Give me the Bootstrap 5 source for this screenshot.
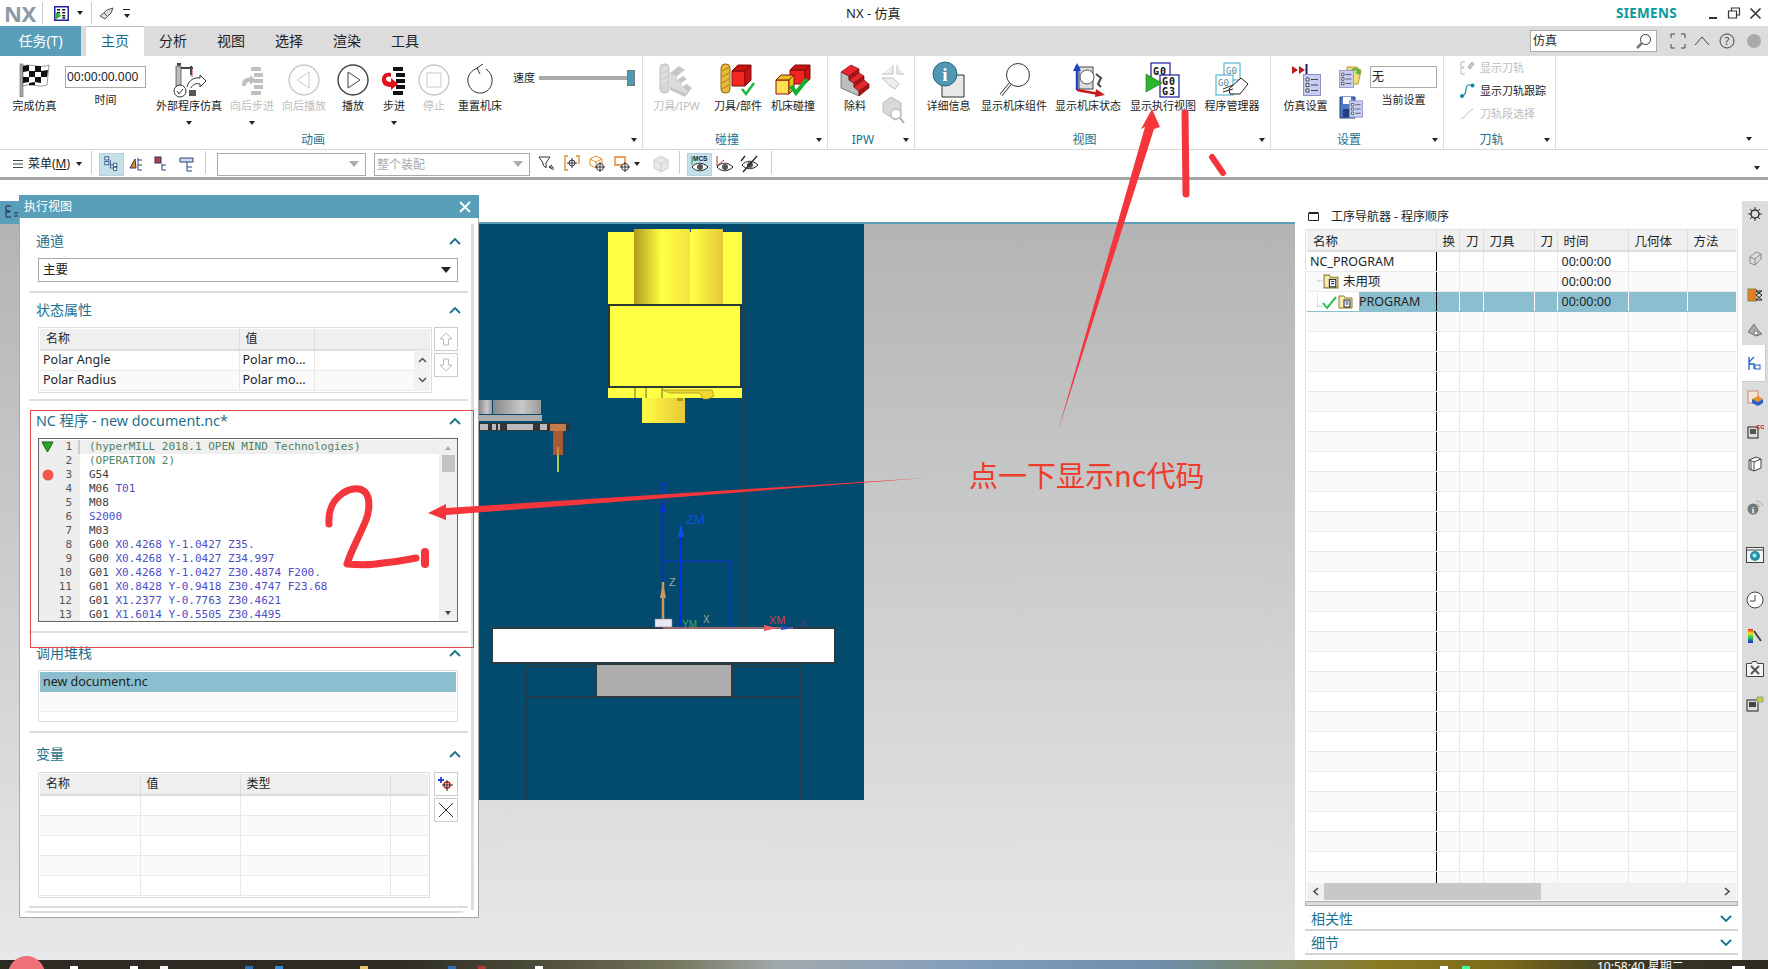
<!DOCTYPE html>
<html lang="zh-CN">
<head>
<meta charset="utf-8">
<title>NX - 仿真</title>
<link href="https://cdn.jsdelivr.net/npm/bootstrap@5.3.0/dist/css/bootstrap.min.css" rel="stylesheet">
<style>
html,body{height:969px;overflow:hidden}
body{width:1768px;font-family:"Noto Sans","Noto Sans CJK SC",sans-serif;font-size:11px;line-height:14px;color:#222;background:#fff;position:relative}
svg{display:block;flex:none}
.nx-title{height:26px;padding-left:4px;padding-right:6px}
.nx-logo{font:700 22px/26px "Noto Sans",sans-serif;color:#8d9aa6;width:33px;letter-spacing:-.5px}
.nx-vsep{width:1px;background:#ccc;align-self:stretch}
.nx-qsep{height:22px;margin:2px 7px 0 5px}
.nx-crt{display:inline-block;width:0;height:0;border:3px solid transparent;border-top:4px solid #222;border-bottom:0;flex:none}
.nx-dash{display:block;width:7px;height:1px;background:#222}
.nx-caption{position:absolute;left:846px;top:5px;font-size:13px;line-height:16px;color:#222}
.nx-siemens{font:700 13.5px/26px "Noto Sans",sans-serif;color:#0a9a9a;letter-spacing:.3px;margin-right:30px}
.nx-tabs{height:30px;background:#dcdcdc}
.nx-tabs .nav-link{padding:0;height:30px;width:58px;text-align:center;font-size:14px;line-height:30px;color:#222;border:0;border-radius:0;background:none}
.nx-tabs .nx-file{width:81px;background:#5a9fb9;color:#fff;margin-right:5px}
.nx-tabs .nav-link.active{background:#fff;color:#146a85;border-top:1px solid #bbb;line-height:28px}
.nx-tright{padding-right:7px}
.nx-search{width:127px;height:22px;border:1px solid #aaa;background:#fff;padding:0 0 0 2px;font-size:12px;line-height:20px;border-radius:0;margin-right:5px}
.nx-mq{margin-left:1px}
.nx-ribbon{height:94px;border-bottom:1px solid #d8d8d8}
.nx-grp{height:93px;display:flex;flex-direction:column;border-right:1px solid #ddd;margin-top:0}
.nx-items{height:75px;display:flex}
.nx-glbl{height:18px;display:flex;align-items:center;padding-right:5px;font-size:12px;color:#1c708c}
.nx-glbl>span:first-child{flex:1;text-align:center;padding-right:5px}
.nx-ri{display:flex;flex-direction:column;align-items:center;white-space:nowrap;padding-top:4px;flex:none}
.nx-ri .nx-ico{height:39px;display:flex;align-items:center;justify-content:center}
.nx-ri .nx-lab{height:14px;line-height:14px}
.nx-ri .nx-crt{margin-top:8px}
.nx-off{color:#bdbdbd}
.nx-field{height:22px;border:1px solid #aaa;font-size:12px;line-height:20px;padding:0 1px;border-radius:0;margin-top:6px;margin-bottom:5px}
.w22{width:22px}.w32{width:32px}.w34{width:34px}.w40{width:40px}.w48{width:48px}.w54{width:54px}.w56{width:56px}.w60{width:60px}.w61{width:61px}.w64{width:64px}.w66{width:66px}.w67{width:67px}.w69{width:69px}.w72{width:72px}.w81{width:81px}.w84{width:84px}.w86{width:86px}
.ml4{margin-left:4px}.ml8{margin-left:8px}.ml2{margin-left:2px}
.g643{width:643px}.g185{width:185px}.g87{width:87px}.g356{width:356px}.g173{width:173px}.g112{width:112px}
.nx-speed{margin-left:3px;padding-top:10px;height:34px}
.nx-track{width:96px;height:4px;background:#aaa;position:relative;margin-left:4px}
.nx-thumb{position:absolute;right:0;top:-6px;width:8px;height:16px;background:#4f9ab5;border:1px solid #777}
.nx-stack{display:flex;flex-direction:column;align-items:center;gap:6px;padding-top:8px}
.nx-tprow{height:23px;display:flex;align-items:center;gap:5px;padding-left:16px;white-space:nowrap}
.nx-tools{height:30px;border-bottom:3px solid #a6a6a6;padding-left:13px;padding-top:1px}
.nx-menu{font-size:12px;margin:0 6px 0 5px}
.nx-tb{height:23px;display:flex;align-items:center;justify-content:center;width:25px;flex:none}
.nx-tb.on{background:#c6e0e9;border:1px solid #b5d3de}
.nx-fsel{height:23px;border:1px solid #aaa;border-radius:0;font-size:12px;padding:0 2px;color:#aaa;line-height:21px;background-size:10px 6px;background-position:right 6px center;background-image:url("data:image/svg+xml,%3csvg xmlns='http://www.w3.org/2000/svg' viewBox='0 0 10 6'%3e%3cpath d='M0 0h10L5 6z' fill='%23aaa'/%3e%3c/svg%3e")}
.w149{width:149px}.w156{width:156px}
.nx-sepa{height:23px;margin:0 9px}
.nx-sepd{height:23px;margin:0 7px 0 9px}
.nx-sepb{height:23px;margin:0 11px 0 6px}
.nx-sepc{height:23px;margin:0 7px 0 6px}
.nx-work{height:780px}
.nx-canvas{width:1295px;flex:none;position:relative;display:flex;flex-direction:column}
.nx-strip{height:42px;flex:none}
.nx-teal{height:2px;flex:none;background:#5a9fb9}
.nx-scene{height:736px;flex:none;background:linear-gradient(#b4b4b4,#e6e8ea)}
.nx-sidetab{position:absolute;left:0;top:21px;width:19px;height:22px;background:#5a9fb9;padding:4px 0 0 5px}
.nx-dlg{position:absolute;left:19px;top:15px;width:460px;height:723px;background:#fff;border:1px solid #a8a8a8;border-top:0;display:flex;flex-direction:column}
.nx-dhead{height:23px;margin:0 -1px;background:#5a9fb9;color:#fff;font-size:12px;line-height:23px;padding-left:5px;flex:none}
.nx-dbody{display:flex;flex:1;min-height:0}
.nx-dcol{width:451px;flex:none}
.nx-dscr{width:3px;background:#dedede;margin:6px 0 7px 0}
.nx-sec{margin:0 3px 0 9px;padding:0 10px 0 9px;border-bottom:2px solid #ddd;box-sizing:border-box}
.h1a{height:75px;padding-top:11px}.h2a{height:108px;padding-top:5px}.h3a{height:232px;padding-top:8px}.h4a{height:100px;padding-top:8px}.h5a{height:175px;padding-top:9px}
.nx-sechd{height:24px;margin-bottom:5px;margin-left:-2px;margin-right:-3px;display:flex;align-items:center;justify-content:space-between;font-size:14px;color:#1c708c}
.nx-nchd{font-size:14.3px}
.nx-vb{margin-bottom:6px}
.nx-sel{height:24px;border:1px solid #aaa;border-radius:0;font-size:12.5px;padding:0 0 0 4px;line-height:22px;color:#222;margin-top:1px;background-size:10px 6px;background-position:right 6px center;background-image:url("data:image/svg+xml,%3csvg xmlns='http://www.w3.org/2000/svg' viewBox='0 0 10 6'%3e%3cpath d='M0 0h10L5 6z' fill='%23222'/%3e%3c/svg%3e")}
.nx-gridwrap{display:flex;gap:2px}
.nx-gbox{border:1px solid #ddd;padding:1px;position:relative}
.table.nx-gt{margin:0;table-layout:fixed;font-size:12.5px;line-height:14px;--bs-table-bg:transparent;--bs-table-border-color:#e8e8e8;border-collapse:collapse;width:100%}
.nx-gt th{height:21px;background:#efefef;font-weight:400;padding:0 0 0 6px;border:0;border-right:1px solid #ddd;border-bottom:2px solid #ddd;vertical-align:middle;font-size:12px;box-shadow:none}
.nx-gt th:last-child{border-right:0}
.nx-gt td{height:20px;padding:0 0 0 3px;border:0;border-right:1px solid #e8e8e8;border-bottom:1px solid #eaeaea;vertical-align:middle;white-space:nowrap;overflow:hidden;box-shadow:none}
.nx-gt td:last-child{border-right:0}
.nx-gt tr:nth-child(even) td{background:#fafafa}
.w394{width:394px}.w392{width:392px}
.nx-sbtn{width:24px;height:24px;padding:0;border:1px solid #ccc;border-radius:0;background:#fff;display:flex;align-items:center;justify-content:center}
.nx-vbtns{display:flex;flex-direction:column;gap:2px}
.nx-pscroll{width:16px;position:absolute;right:1px;top:22px;bottom:1px;background:#f2f2f2;display:flex;flex-direction:column;align-items:center;justify-content:space-around}
.nx-code{height:184px;border:1px solid #666;position:relative;overflow:hidden;font:11px/14px "DejaVu Sans Mono",monospace;color:#3c3c3c;padding-top:1px}
.nx-cl{height:14px;display:flex;white-space:pre}
.nx-cl.cur{background:#efefef}
.nx-no{width:33px;flex:none;text-align:right;background:#eee;color:#555;height:14px}
.nx-cg{width:8px;flex:none;background:#eee;height:14px;margin-right:9px}
.nx-cl.cur .nx-cg{background:linear-gradient(90deg,#eee 6px,#ccc 6px)}
.nx-cmt{color:#4f8264}.nx-b{color:#4e4ec4}
.nx-cscr{position:absolute;right:0;top:0;bottom:0;width:18px;background:#f0f0f0;display:flex;flex-direction:column;align-items:center;padding-top:7px}
.nx-cthumb{width:13px;height:17px;background:#c4c4c4;margin-top:5px}
.nx-up{width:0;height:0;border:3px solid transparent;border-bottom:4px solid #aaa;border-top:0}
.nx-dn{position:absolute;bottom:6px;width:0;height:0;border:3px solid transparent;border-top:4px solid #444;border-bottom:0}
.nx-mk{position:absolute;left:2px}
.nx-m1{top:2px}.nx-m2{top:30px;left:3px}
.nx-list{height:52px;border:1px solid #ddd;padding:1px;font-size:12.5px}
.nx-lrow{height:20px;line-height:19px;padding-left:3px;border-bottom:1px solid #eee}
.nx-lrow.sel{background:#8bbfcf;border:0}
.nx-lrow.alt{background:#fafafa}
.nx-dfoot{height:2px;background:#ddd;margin:3px 8px 0 5px}
.nx-nav{width:447px;flex:none;background:#fff;padding-left:10px;display:flex;flex-direction:column}
.nx-navt{height:49px;padding-top:24px;display:flex;align-items:center;gap:12px;font-size:12px;padding-left:3px;flex:none}
.nx-navbox{width:433px;height:671px;overflow:hidden;border:1px solid #e2e2e2;border-bottom:0;padding:0 1px;display:flex;flex-direction:column;flex:none}
.nx-navscroll{height:17px;flex:none;background:#f0f0f0;display:flex;align-items:center;justify-content:space-between;padding:0 5px;position:relative}
.nx-hthumb{position:absolute;left:17px;top:0;height:17px;width:217px;background:#c8c8c8}
.nx-navwrap{height:653px;overflow:hidden;flex:none}
.table.nx-nt th{height:21px;padding:3px 0 0 6px;background:#f0f0f0;font-size:12.5px}
.table.nx-nt td{padding:0 0 0 4px;height:20px}
.nx-nt td:first-child{border-right:1px solid #000!important;padding:0!important}
.nx-nt tr.pick td{background:#8bbfcf!important;border-right-color:#fff;border-bottom-color:#8bbfcf}
.nx-nt tr.pick td:first-child{background:linear-gradient(90deg,#fff 52px,#8bbfcf 52px)!important}
.nx-tree{display:flex;align-items:center;height:19px}
.nx-t0{padding-left:3px}
.nx-t1{padding-left:10px}
.nx-pg{padding-left:6px}
.nx-c199{width:199px}.nx-c75{width:75px}.nx-c100{width:100px}.nx-c150{width:150px}
.nx-n1{width:129px}.nx-n2{width:23.500px}.nx-n3{width:51px}.nx-n4{width:23px}.nx-n5{width:71px}.nx-n6{width:59px}
.nx-bar{width:433px;height:5px;border:1px solid #aaa;background:#ddd;margin:1px 0;flex:none}
.nx-fold{width:433px;height:24px;padding:1px 6px 0;border-bottom:2px solid #d4d4d4;font-size:14px;color:#1c708c;display:flex;align-items:center;justify-content:space-between;flex:none}
.nx-res{width:26px;flex:none;background:#dcdcdc;margin-top:21px;display:flex;flex-direction:column;align-items:center;padding-top:1px}
.nx-rb{height:24px;width:26px;display:flex;align-items:center;justify-content:center;flex:none}
.nx-rb.on{background:#fff;height:37px;width:24px;margin-left:-2px;border-right:1px solid #ccc;border-bottom:1px solid #ccc}
.m21{margin-top:21px}.m12{margin-top:12px}.m11{margin-top:11px}.m1{margin-top:3px}.m3{margin-top:4px}.m19{margin-top:19px}.m24{margin-top:24px}.m9{margin-top:9px}
.nx-task{height:9px;background:linear-gradient(90deg,#2c2a22 0,#2c2a22 22%,#4a4a38 30%,#74755c 38%,#a2a9ae 44%,#7f9cbc 56%,#6f8ea8 66%,#8a7a22 78%,#7d6a1a 85%,#3c3a26 92%,#2c2a22 100%);overflow:hidden;position:relative;color:#fff;font-size:12px;line-height:14px}
.nx-clock{position:absolute;left:1597px;top:0}
.nx-dot{position:absolute;left:8px;top:956px;width:37px;height:37px;border-radius:50%;background:#ee7078}
.nx-tick{position:absolute;top:6px;width:8px;height:3px;background:#fff}
.t1{left:70px}.t2{left:130px}.t3{left:160px;background:#f4f4f4}.t4{left:245px;background:#2d6fb5}.t5{left:275px;background:#3c86d6}.t6{left:360px;background:#e4c46a}.t7{left:448px;background:#2d6fb5}.t8{left:478px;background:#b03a3a}.t9{left:535px}.t10{left:1440px}.t11{left:1462px;background:#4f9}.t12{left:1732px;width:13px}
.nx-notes{position:absolute;left:0;top:0;width:1768px;height:969px;pointer-events:none}
</style>
</head>
<body>

<svg width="0" height="0" class="position-absolute">
  <symbol id="doc" viewBox="0 0 18 22"><rect x=".5" y=".5" width="17" height="21" fill="#c9cdf0" stroke="#8c90c8"/><path d="M3 4h3v3H3zM3 9.500h3v3H3zM3 15h3v3H3z" fill="#fff" stroke="#445"/><path d="M8 5.500h7M8 11h7M8 16.500h7" stroke="#445"/></symbol>
  <symbol id="fld" viewBox="0 0 15 14"><path d="M1 1h5l1 2h7v10H1z" fill="#f7ecae" stroke="#8a7a30"/><rect x="6" y="5" width="6" height="7" fill="#fff" stroke="#222"/><path d="M7.500 7h3M7.500 9h3" stroke="#22a"/></symbol>
  <symbol id="tree" viewBox="0 0 20 20"><rect x="1" y="1" width="5" height="4" fill="#dfe6f7" stroke="#247"/><rect x="1" y="7" width="5" height="4" fill="#dfe6f7" stroke="#247"/><path d="M8 5v10h4M8 11h4" stroke="#247" fill="none"/><rect x="12" y="9" width="4" height="4" fill="#fff" stroke="#247"/><rect x="12" y="14" width="4" height="4" fill="#fff" stroke="#247"/></symbol>
</svg>

<div class="nx-title d-flex align-items-center">
  <div class="nx-logo">NX</div><div class="nx-vsep nx-qsep"></div>
  <svg class="ms-1" width="15" height="15" viewBox="0 0 20 20"><rect x="1" y="1" width="18" height="18" fill="#fff" stroke="#22229a" stroke-width="2"/><path d="M4 5h4M11 5h4M4 9h4M11 9h4M11 13h4M11 16h4" stroke="#111" stroke-width="2"/><path d="M2 8l8 5-8 5z" fill="#2db52d"/></svg>
  <span class="nx-crt ms-2"></span><div class="nx-vsep nx-qsep ms-2"></div>
  <svg width="16" height="13" viewBox="0 0 16 13"><path d="M1 9l7-6 6-2-2 5-6 6z" fill="#ddd" stroke="#555"/><path d="M5 6l4 4" stroke="#555"/></svg>
  <span class="ms-2 d-flex flex-column align-items-center"><span class="nx-dash"></span><span class="nx-crt mt-1"></span></span>
  <div class="nx-caption">NX - 仿真</div>
  <div class="ms-auto nx-siemens">SIEMENS</div>
  <svg class="me-2" width="12" height="12" viewBox="0 0 12 12"><path d="M2 11h8" stroke="#333" stroke-width="2"/></svg>
  <svg class="me-2" width="14" height="12" viewBox="0 0 14 12"><path d="M1.500 4h8v7h-8zM4.500 4V1h8v7h-3" fill="none" stroke="#333" stroke-width="1.200"/></svg>
  <svg width="13" height="13" viewBox="0 0 13 13"><path d="M1.500 1.500l10 10M11.500 1.500l-10 10" stroke="#333" stroke-width="1.600"/></svg>
</div>

<div class="nx-tabs d-flex align-items-start">
  <ul class="nav">
    <li class="nav-item"><a class="nav-link nx-file" href="#">任务(T)</a></li>
    <li class="nav-item"><a class="nav-link active" href="#">主页</a></li>
    <li class="nav-item"><a class="nav-link" href="#">分析</a></li>
    <li class="nav-item"><a class="nav-link" href="#">视图</a></li>
    <li class="nav-item"><a class="nav-link" href="#">选择</a></li>
    <li class="nav-item"><a class="nav-link" href="#">渲染</a></li>
    <li class="nav-item"><a class="nav-link" href="#">工具</a></li>
  </ul>
  <div class="ms-auto d-flex align-items-center gap-2 mt-1 nx-tright">
    <div class="nx-search d-flex align-items-center justify-content-between">仿真
      <svg class="me-1" width="17" height="17" viewBox="0 0 17 17"><circle cx="10.500" cy="6.500" r="5" fill="#fff" stroke="#333"/><path d="M7 10l-5 5" stroke="#777" stroke-width="2.500"/></svg></div>
    <svg width="16" height="16" viewBox="0 0 16 16"><path d="M1 5V1h4M11 1h4v4M15 11v4h-4M5 15H1v-4" fill="none" stroke="#444"/></svg>
    <svg width="16" height="10" viewBox="0 0 16 10"><path d="M1 9l7-8 7 8" fill="none" stroke="#444"/></svg>
    <svg class="nx-mq" width="16" height="16" viewBox="0 0 16 16"><circle cx="8" cy="8" r="7" fill="none" stroke="#444"/><text x="8" y="12" font-size="11" text-anchor="middle" fill="#444" font-family="Noto Sans">?</text></svg>
    <svg class="ms-1" width="14" height="14" viewBox="0 0 14 14"><circle cx="7" cy="7" r="7" fill="#aaa"/></svg>
  </div>
</div>

<div class="nx-ribbon d-flex">
  <div class="nx-grp g643">
    <div class="nx-items">
      <div class="nx-ri w61 ml4"><div class="nx-ico"><svg width="31" height="34" viewBox="0 0 31 34"><rect x="1" y="1" width="3" height="33" fill="#aaa" stroke="#666" stroke-width=".6"/><path d="M4 3c8-3 16 3 26-1l-2 20c-8 3-16-2-24 1z" fill="#fff" stroke="#333" stroke-width=".5"/><path d="M4 3l6-1v6l-6 1zM16 3l6 0v6l-6 0zM10 8l6 0v6l-6 0zM22 8l7-1-1 7-6 0zM4 14l6 0v5l-6 1zM16 14l6 0v6l-6-1zM10 20l6-1v3l-6 0z" fill="#111"/></svg></div><div class="nx-lab">完成仿真</div></div>
      <div class="nx-ri w81"><div class="form-control nx-field w81">00:00:00.000</div><div class="nx-lab">时间</div></div>
      <div class="nx-ri w86"><div class="nx-ico"><svg width="36" height="36" viewBox="0 0 36 36"><path d="M6 2h4M8 2v20M8 6h14M20 4v9" stroke="#444" stroke-width="2" fill="none"/><rect x="5" y="4" width="5" height="20" fill="#bbb" stroke="#444" stroke-width=".7"/><path d="M21 7v8" stroke="#a33" stroke-width="1"/><circle cx="9" cy="29" r="6" fill="#fff" stroke="#333"/><path d="M6 29l2 3 4-5" stroke="#333" fill="none"/><rect x="18" y="28" width="7" height="6" fill="#555"/><path d="M16 25c2-7 7-10 13-9v-3l6 6-6 6v-3c-4-1-7 0-9 4" fill="#fff" stroke="#333"/></svg></div><div class="nx-lab">外部程序仿真</div><span class="nx-crt"></span></div>
      <div class="nx-ri w40"><div class="nx-ico"><svg width="26" height="32" viewBox="0 0 26 32"><path d="M12 3h10v4H12zM15 9h9v4h-9zM15 15h9v4h-9zM15 21h9v4h-9zM12 27h10v4H12z" fill="#c0c0c0"/><path d="M11 14c-6-1-8 3-8 8h4c0-3 1-4 4-4v3l6-5-6-5z" fill="#c0c0c0"/></svg></div><div class="nx-lab nx-off">向后步进</div><span class="nx-crt"></span></div>
      <div class="nx-ri w64"><div class="nx-ico"><svg width="32" height="32" viewBox="0 0 32 32"><circle cx="16" cy="16" r="15" fill="none" stroke="#c8c8c8" stroke-width="1.400"/><path d="M21 8v16L9 16z" fill="none" stroke="#c8c8c8"/></svg></div><div class="nx-lab nx-off">向后播放</div></div>
      <div class="nx-ri w34"><div class="nx-ico"><svg width="32" height="32" viewBox="0 0 32 32"><circle cx="16" cy="16" r="15" fill="none" stroke="#444" stroke-width="1.400"/><path d="M11 8v16l12-8z" fill="none" stroke="#444"/></svg></div><div class="nx-lab">播放</div></div>
      <div class="nx-ri w48"><div class="nx-ico"><svg width="26" height="32" viewBox="0 0 26 32"><path d="M12 3h10v4H12zM15 9h9v4h-9zM15 15h9v4h-9zM15 21h9v4h-9zM12 27h10v4H12z" fill="#111"/><path d="M10 9C3 8 1 12 1 16c0 5 4 7 9 7v3l7-6-7-6v4c-3 0-5-1-5-3 0-2 2-3 5-2z" fill="#e0101c"/></svg></div><div class="nx-lab">步进</div><span class="nx-crt"></span></div>
      <div class="nx-ri w32"><div class="nx-ico"><svg width="32" height="32" viewBox="0 0 32 32"><circle cx="16" cy="16" r="15" fill="none" stroke="#c8c8c8" stroke-width="1.400"/><rect x="9" y="9" width="14" height="14" fill="none" stroke="#c8c8c8"/></svg></div><div class="nx-lab nx-off">停止</div></div>
      <div class="nx-ri w60"><div class="nx-ico"><svg width="28" height="34" viewBox="0 0 28 34"><path d="M12 5c-7 2-11 8-10 14 1 7 7 12 14 11 7-1 11-8 10-15-1-4-3-7-6-9" fill="none" stroke="#333"/><path d="M17 1l-6 4 3 6" fill="none" stroke="#333"/></svg></div><div class="nx-lab">重置机床</div></div>
      <div class="nx-speed d-flex align-items-center"><span class="nx-lab">速度</span><div class="nx-track"><div class="nx-thumb"></div></div></div>
    </div>
    <div class="nx-glbl"><span>动画</span><span class="nx-crt"></span></div>
  </div>
  <div class="nx-grp g185">
    <div class="nx-items">
      <div class="nx-ri w67"><div class="nx-ico"><svg width="38" height="34" viewBox="0 0 38 34"><rect x="2" y="1" width="9" height="29" rx="4" fill="#d6d6d6" stroke="#c0c0c0"/><path d="M3 8l7-4M3 14l7-4M3 20l7-4" stroke="#eee"/><path d="M12 10l9-7 6 4-8 6v4l6-4 4 3-7 5v4l7-4 5 4-7 9-15-7z" fill="#c6c6c6"/><path d="M12 10l7 3v4l5 3v4l5 3v4l-17-7z" fill="#dadada"/></svg></div><div class="nx-lab nx-off">刀具/IPW</div></div>
      <div class="nx-ri w56"><div class="nx-ico"><svg width="36" height="36" viewBox="0 0 36 36"><rect x="1" y="2" width="9" height="29" rx="4" fill="#eab93c" stroke="#8a6a10"/><path d="M2 9l7-4M2 15l7-4M2 21l7-4M2 27l7-4" stroke="#a9801a"/><path d="M12 9h13v15H12z" fill="#f5261f" stroke="#7a1010"/><path d="M12 9l6-6h13l-6 6zM25 9l6-6v15l-6 6z" fill="#c8130f" stroke="#7a1010"/><path d="M22 27l4 5 8-11" fill="none" stroke="#1fb53e" stroke-width="2.500"/></svg></div><div class="nx-lab">刀具/部件</div></div>
      <div class="nx-ri w54"><div class="nx-ico"><svg width="38" height="36" viewBox="0 0 38 36"><path d="M16 8h15v14H16z" fill="#f5261f" stroke="#7a1010"/><path d="M16 8l5-5h15l-5 5zM31 8l5-5v14l-5 5z" fill="#c8130f" stroke="#7a1010"/><path d="M2 18h13v14H2z" fill="#ffe14d" stroke="#8a1010"/><path d="M2 18l5-5h13l-5 5zM15 18l5-5v14l-5 5z" fill="#e8c020" stroke="#8a1010"/><path d="M17 24l5 7 11-14" fill="none" stroke="#12b030" stroke-width="4"/></svg></div><div class="nx-lab">机床碰撞</div></div>
    </div>
    <div class="nx-glbl"><span>碰撞</span><span class="nx-crt"></span></div>
  </div>
  <div class="nx-grp g87">
    <div class="nx-items">
      <div class="nx-ri w54"><div class="nx-ico"><svg width="30" height="32" viewBox="0 0 30 32"><path d="M1 8l8 4v4l5 3v4l5 4v5L1 24z" fill="#bdbdbd" stroke="#555" stroke-width=".7"/><path d="M1 8l10-7 8 4-10 7z" fill="#e8262e" stroke="#7a1010" stroke-width=".7"/><path d="M9 12l10-7v4L9 16z" fill="#a81418" stroke="#7a1010" stroke-width=".7"/><path d="M9 16l10-7 5 3-10 7z" fill="#e8262e" stroke="#7a1010" stroke-width=".7"/><path d="M14 19l10-7v4l-10 7z" fill="#a81418" stroke="#7a1010" stroke-width=".7"/><path d="M14 23l10-7 5 4-10 7z" fill="#e8262e" stroke="#7a1010" stroke-width=".7"/><path d="M19 27l10-7v4l-10 8z" fill="#a81418" stroke="#7a1010" stroke-width=".7"/></svg></div><div class="nx-lab">除料</div></div>
      <div class="nx-stack w22"><svg width="24" height="26" viewBox="0 0 24 26"><path d="M1 10h11V1M16 1v9h7M1 14h11l6 6-4 5-5-3z" fill="#eee" stroke="#c0c0c0"/></svg><svg width="24" height="28" viewBox="0 0 24 28"><path d="M2 7l8-6 10 6v14l-6 3-12-8z" fill="#d8d8d8" stroke="#bbb"/><circle cx="15" cy="18" r="5" fill="#fff" stroke="#aaa"/><path d="M19 22l4 5" stroke="#aaa" stroke-width="2"/></svg></div>
    </div>
    <div class="nx-glbl"><span>IPW</span><span class="nx-crt"></span></div>
  </div>
  <div class="nx-grp g356">
    <div class="nx-items">
      <div class="nx-ri w67"><div class="nx-ico"><svg width="34" height="37" viewBox="0 0 34 37"><path d="M10 14h22v22H10z" fill="#e8e8e8" stroke="#333"/><circle cx="13" cy="13" r="12" fill="#4f97b4" stroke="#2a6a84"/><text x="13" y="20" text-anchor="middle" font-size="19" font-weight="700" fill="#fff" font-family="Liberation Serif">i</text></svg></div><div class="nx-lab">详细信息</div></div>
      <div class="nx-ri w64"><div class="nx-ico"><svg width="32" height="36" viewBox="0 0 32 36"><circle cx="20" cy="13" r="11.500" fill="#fff" stroke="#333"/><path d="M12 22L3 33" stroke="#333" stroke-width="3.500"/><path d="M12 22L3 33" stroke="#fff" stroke-width="1.800"/></svg></div><div class="nx-lab">显示机床组件</div></div>
      <div class="nx-ri w84"><div class="nx-ico"><svg width="34" height="36" viewBox="0 0 34 36"><rect x="8" y="5" width="14" height="22" fill="#ddd" stroke="#444"/><circle cx="16" cy="15" r="7" fill="#fff" stroke="#555"/><path d="M25 12l5 4-3 6 3 3" stroke="#444" fill="none" stroke-width="2"/><path d="M6 28V3" stroke="#1a45c8" stroke-width="2.500"/><path d="M2 9l4-8 4 8z" fill="#1a45c8"/><path d="M6 28l22 4" stroke="#c81a1a" stroke-width="2.500"/><path d="M25 27l9 6-10 2z" fill="#c81a1a"/></svg></div><div class="nx-lab">显示机床状态</div></div>
      <div class="nx-ri w66"><div class="nx-ico"><svg width="36" height="36" viewBox="0 0 36 36"><rect x="6" y="1" width="19" height="19" fill="#fff" stroke="#1c1c9a" stroke-width="1.200"/><text x="8" y="13" font-family="DejaVu Sans Mono" font-weight="700" font-size="10" fill="#111" letter-spacing="1">G0</text><rect x="15" y="13" width="19" height="22" fill="#fff" stroke="#1c1c9a" stroke-width="1.200"/><text x="17" y="23" font-family="DejaVu Sans Mono" font-weight="700" font-size="10" fill="#111" letter-spacing="1">G0</text><text x="17" y="33" font-family="DejaVu Sans Mono" font-weight="700" font-size="10" fill="#111" letter-spacing="1">G3</text><path d="M1 12l16 9-16 9z" fill="#2db52d" stroke="#1a6a1a" stroke-width=".6"/></svg></div><div class="nx-lab">显示执行视图</div></div>
      <div class="nx-ri w72"><div class="nx-ico"><svg width="34" height="36" viewBox="0 0 34 36"><rect x="9" y="1" width="16" height="17" fill="#fff" stroke="#35a9c2"/><text x="11" y="12" font-family="DejaVu Sans Mono" font-size="9" fill="#5a8a98">G0</text><rect x="1" y="13" width="17" height="20" fill="#fff" stroke="#35a9c2"/><text x="3" y="24" font-family="DejaVu Sans Mono" font-size="9" fill="#5a8a98">G0</text><path d="M14 27l12-11 7 6-8 10-10 0z" fill="#fff" stroke="#222"/><path d="M8 27l10-4M8 30l10-3" stroke="#222"/></svg></div><div class="nx-lab">程序管理器</div></div>
    </div>
    <div class="nx-glbl"><span>视图</span><span class="nx-crt"></span></div>
  </div>
  <div class="nx-grp g173">
    <div class="nx-items">
      <div class="nx-ri w69"><div class="nx-ico"><svg width="30" height="34" viewBox="0 0 30 34"><path d="M1 3l6 4-6 4zM8 3l6 4-6 4z" fill="#c01a1a"/><path d="M15.500 1v11" stroke="#1c1c6a" stroke-width="2"/><use href="#doc" x="12" y="11" width="18" height="22"/></svg></div><div class="nx-lab">仿真设置</div></div>
      <div class="nx-stack w22"><svg width="24" height="24" viewBox="0 0 24 24"><path d="M8 3h10l4 4-3 13H8z" fill="#f3dc7a" stroke="#b69a30"/><path d="M12 6c3-3 6-3 8 0l2-1-1 6-5-2 2-1c-1-2-3-2-5 0" fill="#5ab54a"/><use href="#doc" x="0" y="6" width="15" height="18"/></svg><svg width="24" height="26" viewBox="0 0 24 26"><path d="M1 3h15v21H1z" fill="#4d78c4" stroke="#223e80"/><path d="M4 3h8v7H4z" fill="#fff"/><rect x="4" y="15" width="7" height="8" fill="#223e80"/><use href="#doc" x="10" y="5" width="14" height="20"/></svg></div>
      <div class="nx-ri w67 ml8"><div class="form-control nx-field w67">无</div><div class="nx-lab">当前设置</div></div>
    </div>
    <div class="nx-glbl"><span>设置</span><span class="nx-crt"></span></div>
  </div>
  <div class="nx-grp g112">
    <div class="nx-items d-block">
      <div class="nx-tprow nx-off"><svg width="15" height="15" viewBox="0 0 15 15"><path d="M5 2H1v5h3v1H1v6h4" fill="none" stroke="#bbb"/><path d="M8 7l4-5 2 2-4 5z" fill="#ccc" stroke="#aaa"/></svg>显示刀轨</div>
      <div class="nx-tprow"><svg width="15" height="15" viewBox="0 0 15 15"><path d="M2 13c3-1 4-3 4-6 0-3 1-5 3-5h3" fill="none" stroke="#0e8aa0" stroke-width="1.200"/><circle cx="2" cy="13" r="2" fill="#0e8aa0"/><circle cx="12.500" cy="2.500" r="2" fill="#0e8aa0"/></svg>显示刀轨跟踪</div>
      <div class="nx-tprow nx-off"><svg width="15" height="15" viewBox="0 0 15 15"><path d="M1 13c4-1 6-7 12-10" fill="none" stroke="#bbb"/></svg>刀轨段选择</div>
    </div>
    <div class="nx-glbl"><span>刀轨</span><span class="nx-crt"></span></div>
  </div>
  <div class="flex-grow-1 d-flex justify-content-end align-items-end pe-3 pb-2"><span class="nx-crt"></span></div>
</div>

<div class="nx-tools d-flex align-items-center">
  <svg width="10" height="10" viewBox="0 0 10 10"><path d="M0 1.500h10M0 5h10M0 8.500h10" stroke="#444"/></svg>
  <span class="nx-menu">菜单(<u>M</u>)</span><span class="nx-crt"></span>
  <div class="nx-vsep nx-sepd"></div>
  <div class="nx-tb on"><svg width="16" height="16"><use href="#tree" width="16" height="16"/></svg></div>
  <div class="nx-tb"><svg width="16" height="16" viewBox="0 0 16 16"><path d="M1 12l5-9 1 9z" fill="#d98a2a" stroke="#336"/><path d="M9 2v12M9 4h4M9 9h4M9 14h4" stroke="#247" fill="none"/></svg></div>
  <div class="nx-tb"><svg width="16" height="16" viewBox="0 0 16 16"><rect x="1" y="1" width="6" height="6" fill="#b04040" stroke="#336"/><path d="M8 8v6M8 9h4M8 14h4" stroke="#247"/></svg></div>
  <div class="nx-tb"><svg width="16" height="16" viewBox="0 0 16 16"><path d="M1 2h13v4H1z" fill="#cde" stroke="#247"/><path d="M8 6v9M8 11h5M8 15h5" stroke="#247"/></svg></div>
  <div class="nx-vsep nx-sepb"></div>
  <div class="form-select nx-fsel w149"></div>
  <div class="form-select nx-fsel w156 ms-2">整个装配</div>
  <div class="nx-tb ms-1"><svg width="18" height="18" viewBox="0 0 18 18"><path d="M1 2h11L8 8v5L5 10V8z" fill="#fff" stroke="#333"/><path d="M11 12l3-2M11 12l3 2M11 12h4v3" stroke="#333" fill="none"/></svg></div>
  <div class="nx-tb"><svg width="18" height="18" viewBox="0 0 18 18"><path d="M5 1H2v14h3M13 1h3v8" fill="none" stroke="#d98a2a" stroke-width="1.300"/><circle cx="9" cy="8" r="3" fill="none" stroke="#333"/><path d="M9 3v10M4 8h10" stroke="#333"/></svg></div>
  <div class="nx-tb"><svg width="18" height="18" viewBox="0 0 18 18"><path d="M8 1l6 3v6l-6 3-6-3V4zM2 4l6 3 6-3M8 7v6" fill="none" stroke="#e09020"/><circle cx="12" cy="12" r="3.500" fill="#fff" stroke="#333"/><path d="M12 7v10M7 12h10" stroke="#333"/></svg></div>
  <div class="nx-tb"><svg width="18" height="18" viewBox="0 0 18 18"><path d="M2 2h10v8H2z" fill="none" stroke="#e08020" stroke-width="1.300"/><circle cx="12" cy="12" r="3.500" fill="#fff" stroke="#333"/><path d="M12 7v10M7 12h10" stroke="#333"/></svg></div>
  <span class="nx-crt"></span>
  <div class="nx-tb ms-2"><svg width="18" height="18" viewBox="0 0 18 18"><path d="M9 1l7 4v8l-7 4-7-4V5z" fill="#e8e8e8" stroke="#ccc"/><path d="M2 5l7 4 7-4M9 9v8" fill="none" stroke="#ccc"/></svg></div>
  <div class="nx-vsep nx-sepc"></div>
  <div class="nx-tb on"><svg width="22" height="20" viewBox="0 0 22 20"><text x="4" y="7" font-size="6.500" font-family="Liberation Sans" font-weight="700" fill="#222">MCS</text><path d="M3 13c4-5 11-5 16 0-5 5-12 5-16 0z" fill="#fff" stroke="#222"/><circle cx="11" cy="13" r="3" fill="#555"/><path d="M3 2v9" stroke="#18a030"/></svg></div>
  <div class="nx-tb"><svg width="20" height="20" viewBox="0 0 20 20"><path d="M2 2v10l7-6" fill="none" stroke="#b03030"/><path d="M2 13c4-5 11-5 16 0-5 5-12 5-16 0z" fill="#fff" stroke="#222"/><circle cx="10" cy="13" r="3" fill="#555"/></svg></div>
  <div class="nx-tb"><svg width="20" height="20" viewBox="0 0 20 20"><path d="M2 11c4-5 11-5 16 0-5 5-12 5-16 0z" fill="#fff" stroke="#222"/><circle cx="10" cy="11" r="3" fill="#555"/><path d="M3 18L17 2M1 7l4-5" stroke="#222" stroke-width="1.300"/></svg></div>
  <div class="nx-vsep nx-sepa"></div>
  <span class="nx-crt ms-auto me-2 mt-2"></span>
</div>

<div class="nx-work d-flex">
  <div class="nx-canvas">
    <div class="nx-strip"></div>
    <div class="nx-teal"></div>
    <div class="nx-scene">
      <svg width="1295" height="736" viewBox="0 224 1295 736">
        <defs>
          <linearGradient id="cy1"><stop offset="0" stop-color="#b09a20"/><stop offset=".5" stop-color="#ffff44"/><stop offset="1" stop-color="#f4e240"/></linearGradient>
          <linearGradient id="cy2"><stop offset="0" stop-color="#ffff44"/><stop offset="1" stop-color="#e8c838"/></linearGradient>
          <linearGradient id="gr1"><stop offset="0" stop-color="#888"/><stop offset=".6" stop-color="#c8c8c8"/><stop offset="1" stop-color="#9a9a9a"/></linearGradient>
        </defs>
        <rect x="479" y="224" width="385" height="576" fill="#024a6e"/>
        <path d="M744.500 224v404" stroke="#2a3f4c"/>
        <rect x="608" y="232" width="134" height="72" fill="#ffff44"/>
        <rect x="634" y="229" width="56" height="75" fill="url(#cy1)"/><rect x="691" y="229" width="32" height="75" fill="url(#cy2)"/>
        <rect x="608" y="304" width="134" height="84" fill="#2a3a34"/>
        <rect x="610" y="306" width="130" height="80" fill="#ffff44"/>
        <rect x="608" y="388" width="134" height="10" fill="#ffff44"/>
        <path d="M635 388v10M646 388v10M662 388v10" stroke="#6a6a30"/><path d="M662 390h50l2 6-6 3h-5l-3-6h-30z" fill="#f0d830" stroke="#8a7a20" stroke-width=".6"/>
        <rect x="642" y="398" width="43" height="25" fill="url(#cy2)"/>
        <path d="M677 398h6v3h-6z" fill="#a89a20"/>
        <rect x="479" y="400" width="13" height="14" fill="url(#gr1)"/><rect x="493" y="400" width="48" height="14" fill="url(#gr1)"/>
        <rect x="479" y="415" width="63" height="6" fill="#aaa"/>
        <rect x="479" y="423" width="91" height="8" fill="#333"/><path d="M480 424h8v6h-8zM492 424h4v6h-4zM498 424h2v6h-2zM507 424h26v6h-26zM540 424h7v6h-7z" fill="#bbb"/>
        <rect x="550" y="424" width="16" height="7" fill="#c57a4a"/><rect x="553" y="431" width="10" height="24" fill="#a85a35"/><rect x="557" y="447" width="2" height="8" fill="#d08a40"/><rect x="557" y="455" width="2" height="17" fill="#a8c850"/>
        <rect x="492" y="628" width="343" height="35" fill="#fff" stroke="#2c3a42" stroke-width="2"/>
        <rect x="596" y="664" width="136" height="33" fill="#adadad" stroke="#2c3a42" stroke-width="2"/>
        <path d="M527 666v134M800 666v134M527 697h273M527 666h69M732 666h68" stroke="#2c3a42" stroke-width="1.500" fill="none"/>
        <path d="M663 500v128M680.500 524v104M663 561h67v67" stroke="#0a2ed8" fill="none" stroke-width="1.200"/>
        <path d="M663 500l-3 12h6z" fill="#0a2ed8"/><path d="M681 523l-3 14h6z" fill="#0a52e0"/>
        <path d="M663 582v44" stroke="#c89a60" stroke-width="2.500"/><path d="M663 582l-3 16h6z" fill="#c89a60"/>
        <text x="669" y="586" font-size="11" font-family="Liberation Sans" fill="#b0a89a">Z</text>
        <text x="686" y="524" font-size="13" font-family="Liberation Sans" fill="#0a52e0">ZM</text>
        <rect x="655" y="619" width="17" height="8" fill="#e8e8f0" stroke="#889" stroke-width=".6"/>
        <text x="682" y="628" font-size="10" font-family="Liberation Sans" fill="#3fae5a">YM</text>
        <text x="703" y="623" font-size="10" font-family="Liberation Sans" fill="#b0a89a">X</text>
        <text x="769" y="624" font-size="11" font-family="Liberation Sans" fill="#d04040">XM</text>
        <text x="800" y="627" font-size="10" font-family="Liberation Sans" fill="#446">X</text>
        <path d="M663 628h130" stroke="#b87878" stroke-width="1.500"/><path d="M764 625l14 3-14 3z" fill="#e06060"/><path d="M781 626l13 2-13 2z" fill="#2a4ac8"/>
      </svg>
    </div>
    <div class="nx-sidetab"><svg width="14" height="14" viewBox="0 0 14 14"><path d="M6 1H1v5h4v1H1v5h5M9 8h4M9 11h4" fill="none" stroke="#224"/></svg></div>

    <div class="nx-dlg">
      <div class="nx-dhead d-flex align-items-center justify-content-between"><span>执行视图</span><svg class="me-2" width="12" height="12" viewBox="0 0 12 12"><path d="M1 1l10 10M11 1L1 11" stroke="#fff" stroke-width="1.800"/></svg></div>
      <div class="nx-dbody">
        <div class="nx-dcol">
          <section class="nx-sec h1a">
            <div class="nx-sechd"><span>通道</span><svg width="12" height="8" viewBox="0 0 12 8"><path d="M1 7l5-5 5 5" fill="none" stroke="#1c708c" stroke-width="1.800"/></svg></div>
            <select class="form-select nx-sel"><option>主要</option></select>
          </section>
          <section class="nx-sec h2a">
            <div class="nx-sechd"><span>状态属性</span><svg width="12" height="8" viewBox="0 0 12 8"><path d="M1 7l5-5 5 5" fill="none" stroke="#1c708c" stroke-width="1.800"/></svg></div>
            <div class="nx-gridwrap">
              <div class="nx-gbox w394">
                <table class="table nx-gt"><colgroup><col class="nx-c199"><col class="nx-c75"><col></colgroup>
                  <thead><tr><th>名称</th><th>值</th><th></th></tr></thead>
                  <tbody><tr><td>Polar Angle</td><td>Polar mo...</td><td></td></tr><tr><td>Polar Radius</td><td>Polar mo...</td><td></td></tr></tbody>
                </table>
                <div class="nx-pscroll"><svg width="9" height="6" viewBox="0 0 9 6"><path d="M1 5l3.500-3.500L8 5" fill="none" stroke="#555" stroke-width="1.500"/></svg><svg width="9" height="6" viewBox="0 0 9 6"><path d="M1 1l3.500 3.500L8 1" fill="none" stroke="#555" stroke-width="1.500"/></svg></div>
              </div>
              <div class="nx-vbtns">
                <button class="btn nx-sbtn" type="button"><svg width="14" height="14" viewBox="0 0 14 14"><path d="M7 1l6 6H9.500v6h-5V7H1z" fill="#fff" stroke="#bbb"/></svg></button>
                <button class="btn nx-sbtn" type="button"><svg width="14" height="14" viewBox="0 0 14 14"><path d="M7 13l6-6H9.500V1h-5v6H1z" fill="#fff" stroke="#bbb"/></svg></button>
              </div>
            </div>
          </section>
          <section class="nx-sec h3a">
            <div class="nx-sechd"><span class="nx-nchd">NC 程序 - new document.nc*</span><svg width="12" height="8" viewBox="0 0 12 8"><path d="M1 7l5-5 5 5" fill="none" stroke="#1c708c" stroke-width="1.800"/></svg></div>
            <div class="nx-code">
              <div class="nx-cl cur"><span class="nx-no">1</span><span class="nx-cg"></span><span class="nx-cmt">(hyperMILL 2018.1 OPEN MIND Technologies)</span></div>
              <div class="nx-cl"><span class="nx-no">2</span><span class="nx-cg"></span><span class="nx-cmt">(OPERATION 2)</span></div>
              <div class="nx-cl"><span class="nx-no">3</span><span class="nx-cg"></span>G54</div>
              <div class="nx-cl"><span class="nx-no">4</span><span class="nx-cg"></span>M06 <span class="nx-b">T01</span></div>
              <div class="nx-cl"><span class="nx-no">5</span><span class="nx-cg"></span>M08</div>
              <div class="nx-cl"><span class="nx-no">6</span><span class="nx-cg"></span><span class="nx-b">S2000</span></div>
              <div class="nx-cl"><span class="nx-no">7</span><span class="nx-cg"></span>M03</div>
              <div class="nx-cl"><span class="nx-no">8</span><span class="nx-cg"></span>G00 <span class="nx-b">X0.4268 Y-1.0427 Z35.</span></div>
              <div class="nx-cl"><span class="nx-no">9</span><span class="nx-cg"></span>G00 <span class="nx-b">X0.4268 Y-1.0427 Z34.997</span></div>
              <div class="nx-cl"><span class="nx-no">10</span><span class="nx-cg"></span>G01 <span class="nx-b">X0.4268 Y-1.0427 Z30.4874 F200.</span></div>
              <div class="nx-cl"><span class="nx-no">11</span><span class="nx-cg"></span>G01 <span class="nx-b">X0.8428 Y-0.9418 Z30.4747 F23.68</span></div>
              <div class="nx-cl"><span class="nx-no">12</span><span class="nx-cg"></span>G01 <span class="nx-b">X1.2377 Y-0.7763 Z30.4621</span></div>
              <div class="nx-cl"><span class="nx-no">13</span><span class="nx-cg"></span>G01 <span class="nx-b">X1.6014 Y-0.5505 Z30.4495</span></div>
              <svg class="nx-mk nx-m1" width="13" height="12" viewBox="0 0 13 12"><path d="M1 1h11L6.500 11z" fill="#2aa82a" stroke="#155a15"/></svg>
              <svg class="nx-mk nx-m2" width="12" height="12" viewBox="0 0 12 12"><circle cx="6" cy="6" r="5.500" fill="#f4564a"/></svg>
              <div class="nx-cscr"><span class="nx-up"></span><span class="nx-cthumb"></span><span class="nx-dn"></span></div>
            </div>
          </section>
          <section class="nx-sec h4a">
            <div class="nx-sechd"><span>调用堆栈</span><svg width="12" height="8" viewBox="0 0 12 8"><path d="M1 7l5-5 5 5" fill="none" stroke="#1c708c" stroke-width="1.800"/></svg></div>
            <div class="nx-list"><div class="nx-lrow sel">new document.nc</div><div class="nx-lrow alt"></div></div>
          </section>
          <section class="nx-sec h5a">
            <div class="nx-sechd nx-vb"><span>变量</span><svg width="12" height="8" viewBox="0 0 12 8"><path d="M1 7l5-5 5 5" fill="none" stroke="#1c708c" stroke-width="1.800"/></svg></div>
            <div class="nx-gridwrap">
              <div class="nx-gbox w392">
                <table class="table nx-gt"><colgroup><col class="nx-c100"><col class="nx-c100"><col class="nx-c150"><col></colgroup>
                  <thead><tr><th>名称</th><th>值</th><th>类型</th><th></th></tr></thead>
                  <tbody><tr><td></td><td></td><td></td><td></td></tr><tr><td></td><td></td><td></td><td></td></tr><tr><td></td><td></td><td></td><td></td></tr><tr><td></td><td></td><td></td><td></td></tr><tr><td></td><td></td><td></td><td></td></tr></tbody>
                </table>
              </div>
              <div class="nx-vbtns ml2">
                <button class="btn nx-sbtn" type="button"><svg width="16" height="16" viewBox="0 0 16 16"><path d="M3 1v6M0 4h6" stroke="#1a45c8" stroke-width="1.800"/><circle cx="9" cy="9" r="3" fill="none" stroke="#d01a1a" stroke-width="1.500"/><path d="M9 4v11M4 9h11" stroke="#222"/></svg></button>
                <button class="btn nx-sbtn" type="button"><svg width="16" height="16" viewBox="0 0 16 16"><path d="M1 1l14 14M15 1L1 15" stroke="#333"/></svg></button>
              </div>
            </div>
          </section>
          <div class="nx-dfoot"></div>
        </div>
        <div class="nx-dscr"></div>
      </div>
    </div>
  </div>

  <div class="nx-nav">
    <div class="nx-navt"><svg width="11" height="9" viewBox="0 0 11 9"><path d="M.5 1.500h10v7H.5z" fill="#fff" stroke="#222"/><path d="M.5 1h10" stroke="#222" stroke-width="2"/></svg><span>工序导航器 - 程序顺序</span></div>
    <div class="nx-navbox">
      <div class="nx-navwrap">
        <table class="table nx-gt nx-nt">
          <colgroup><col class="nx-n1"><col class="nx-n2"><col class="nx-n2"><col class="nx-n3"><col class="nx-n4"><col class="nx-n5"><col class="nx-n6"><col></colgroup>
          <thead><tr><th>名称</th><th>换</th><th>刀</th><th>刀具</th><th>刀</th><th>时间</th><th>几何体</th><th>方法</th></tr></thead>
          <tbody id="navrows">
            <tr><td><div class="nx-tree nx-t0">NC_PROGRAM</div></td><td></td><td></td><td></td><td></td><td>00:00:00</td><td></td><td></td></tr>
            <tr><td><div class="nx-tree nx-t1"><svg width="22" height="15" viewBox="0 0 22 15"><path d="M0 7h6" stroke="#999" stroke-dasharray="1 1"/><use href="#fld" x="6" y="0" width="16" height="15"/></svg><span class="ms-1">未用项</span></div></td><td></td><td></td><td></td><td></td><td>00:00:00</td><td></td><td></td></tr>
            <tr class="pick"><td><div class="nx-tree nx-t1"><svg width="36" height="16" viewBox="0 0 36 16"><path d="M0 12h5M0 0v12" stroke="#999" stroke-dasharray="1 1"/><path d="M6 9l4 5 9-11" fill="none" stroke="#2cc04a" stroke-width="2"/><use href="#fld" x="21" y="1" width="15" height="14"/></svg><span class="nx-pg">PROGRAM</span></div></td><td></td><td></td><td></td><td></td><td>00:00:00</td><td></td><td></td></tr>
          </tbody>
        </table>
      </div>
      <div class="nx-navscroll"><svg width="7" height="9" viewBox="0 0 7 9"><path d="M6 1L2 4.500 6 8" fill="none" stroke="#444" stroke-width="1.500"/></svg><div class="nx-hthumb"></div><svg width="7" height="9" viewBox="0 0 7 9"><path d="M1 1l4 3.500L1 8" fill="none" stroke="#444" stroke-width="1.500"/></svg></div>
    </div>
    <div class="nx-bar"></div>
    <div class="nx-fold"><span>相关性</span><svg width="12" height="8" viewBox="0 0 12 8"><path d="M1 1l5 5 5-5" fill="none" stroke="#1c708c" stroke-width="1.800"/></svg></div>
    <div class="nx-fold"><span>细节</span><svg width="12" height="8" viewBox="0 0 12 8"><path d="M1 1l5 5 5-5" fill="none" stroke="#1c708c" stroke-width="1.800"/></svg></div>
  </div>

  <div class="nx-res">
    <div class="nx-rb"><svg width="14" height="14" viewBox="0 0 14 14"><circle cx="7" cy="7" r="4" fill="none" stroke="#333" stroke-width="1.500"/><path d="M7 0v3M7 11v3M0 7h3M11 7h3M2 2l2 2M10 10l2 2M12 2l-2 2M4 10l-2 2" stroke="#333"/></svg></div>
    <div class="nx-rb m21"><svg width="14" height="16" viewBox="0 0 14 16"><path d="M2 6l6-5 5 2v5l-6 6-5-2z" fill="#ddd" stroke="#888"/><path d="M2 6l5 2 6-5M7 8v6" fill="none" stroke="#888"/></svg></div>
    <div class="nx-rb m12"><svg width="16" height="16" viewBox="0 0 16 16"><rect x="1" y="2" width="8" height="12" fill="#e87a20" stroke="#884"/><path d="M9 4l6 4-6 5 6 0-6-5 6-4z" fill="none" stroke="#222"/></svg></div>
    <div class="nx-rb m11"><svg width="16" height="14" viewBox="0 0 16 14"><path d="M1 9l6-8 3 5 5 5-6 2z" fill="#aaa" stroke="#777"/><circle cx="9" cy="10" r="2" fill="#fff" stroke="#777"/></svg></div>
    <div class="nx-rb on m1"><svg width="14" height="15" viewBox="0 0 14 15"><path d="M2 1v13M2 6l5-5M2 8h5v5" fill="none" stroke="#1a60c8" stroke-width="1.300"/><rect x="8" y="9" width="5" height="4" fill="none" stroke="#1a60c8"/></svg></div>
    <div class="nx-rb m3"><svg width="17" height="16" viewBox="0 0 17 16"><rect x="1" y="1" width="10" height="12" fill="#f3e6d4" stroke="#c87"/><path d="M5 9l6-3 5 3-5 3z" fill="#e89020"/><path d="M5 9v4l6 3 5-3V9l-5 3z" fill="#2a60c8"/></svg></div>
    <div class="nx-rb m9"><svg width="17" height="16" viewBox="0 0 17 16"><rect x="1" y="4" width="10" height="11" fill="#ddd" stroke="#222"/><rect x="3" y="6" width="6" height="5" fill="#555"/><text x="9" y="6" font-size="6" fill="#d01a1a" font-family="Liberation Sans" font-weight="700">CO</text></svg></div>
    <div class="nx-rb m9"><svg width="14" height="16" viewBox="0 0 14 16"><path d="M1 4l7-3 5 2v9l-7 3-5-2z" fill="#fff" stroke="#444"/><path d="M1 4l5 2 7-3M6 6v9M3 5v9" fill="none" stroke="#444"/></svg></div>
    <div class="nx-rb m19"><svg width="18" height="16" viewBox="0 0 18 16"><circle cx="7" cy="10" r="5.500" fill="#777"/><text x="7" y="13.500" font-size="9" text-anchor="middle" font-weight="700" fill="#fff" font-family="Liberation Serif">i</text><path d="M10 2c3 0 6 2 7 5M10 5c2 0 3 1 4 3" fill="none" stroke="#aaa"/></svg></div>
    <div class="nx-rb m24"><svg width="18" height="16" viewBox="0 0 18 16"><rect x=".5" y=".5" width="17" height="15" fill="#f4f4f4" stroke="#444"/><path d="M.5 3h17" stroke="#444"/><circle cx="9" cy="9" r="5" fill="#2a8aa8"/><path d="M6 8l3-2 2 3-3 2z" fill="#8fd"/></svg></div>
    <div class="nx-rb m21"><svg width="18" height="18" viewBox="0 0 18 18"><circle cx="9" cy="9" r="8" fill="#fff" stroke="#444"/><path d="M9 4v6H4" fill="none" stroke="#444"/></svg></div>
    <div class="nx-rb m12"><svg width="16" height="16" viewBox="0 0 16 16"><defs><linearGradient id="rb" x1="0" y1="0" x2="0" y2="1"><stop offset="0" stop-color="#f02020"/><stop offset=".3" stop-color="#f0e020"/><stop offset=".6" stop-color="#20d040"/><stop offset="1" stop-color="#2020e0"/></linearGradient></defs><rect x="1" y="1" width="5" height="14" fill="url(#rb)"/><path d="M7 3l7 10" stroke="#444" stroke-width="2"/></svg></div>
    <div class="nx-rb m9"><svg width="18" height="16" viewBox="0 0 18 16"><path d="M.5 2.500h5l1-2h4l1 2h6v13H.5z" fill="#f4f4f4" stroke="#444"/><path d="M5 5l8 8M13 5l-8 8" stroke="#555" stroke-width="2"/></svg></div>
    <div class="nx-rb m11"><svg width="18" height="16" viewBox="0 0 18 16"><rect x="1" y="4" width="11" height="11" fill="#ddd" stroke="#222"/><rect x="3" y="6" width="7" height="5" fill="#444"/><path d="M11 1h6v5h-6z" fill="#d8c840" stroke="#8a8"/></svg></div>
  </div>
</div>

<div class="nx-task"><span class="nx-tick t1"></span><span class="nx-tick t2"></span><span class="nx-tick t3"></span><span class="nx-tick t4"></span><span class="nx-tick t5"></span><span class="nx-tick t6"></span><span class="nx-tick t7"></span><span class="nx-tick t8"></span><span class="nx-tick t9"></span><span class="nx-tick t10"></span><span class="nx-tick t11"></span><span class="nx-tick t12"></span><span class="nx-clock">10:58:40 星期二</span></div>
<div class="nx-dot"></div>

<svg class="nx-notes" viewBox="0 0 1768 969">
  <rect x="30.500" y="410.500" width="443" height="237" fill="none" stroke="#e04a4a"/>
  <path d="M1058 431L1145 127L1141 129L1152 109L1160 127L1154 129z" fill="#f4363c"/>
  <path d="M1185 113l1 81" stroke="#f4363c" stroke-width="7" stroke-linecap="round" fill="none"/>
  <path d="M1212 157l11 16" stroke="#f4363c" stroke-width="6" stroke-linecap="round" fill="none"/>
  <path d="M925 478L446 508L446 504L428 513L446 520L446 515z" fill="#f4363c"/>
  <path d="M329 524c-1-15 4-24 14-31 8-5 17-6 22-1 6 6 4 21 1 28-6 15-15 31-19 44 12 1 26 1 36-1 13-1 23-3 33-5" fill="none" stroke="#f4363c" stroke-width="7" stroke-linecap="round" stroke-linejoin="round"/>
  <path d="M425 552v12" stroke="#f4363c" stroke-width="8" stroke-linecap="round"/>
  <text x="660" y="492" font-size="13" font-family="Liberation Sans" fill="#1034e4">Z</text>
  <text x="969" y="487" font-size="29" fill="#ee3c2c" font-family="Noto Sans CJK SC,sans-serif">点一下显示nc代码</text>
</svg>

<script>
var b=document.getElementById('navrows');
for(var i=0;i<29;i++){var r=document.createElement('tr');for(var j=0;j<8;j++)r.appendChild(document.createElement('td'));b.appendChild(r);}
</script>
<script src="https://cdn.jsdelivr.net/npm/bootstrap@5.3.0/dist/js/bootstrap.bundle.min.js"></script>
</body>
</html>
